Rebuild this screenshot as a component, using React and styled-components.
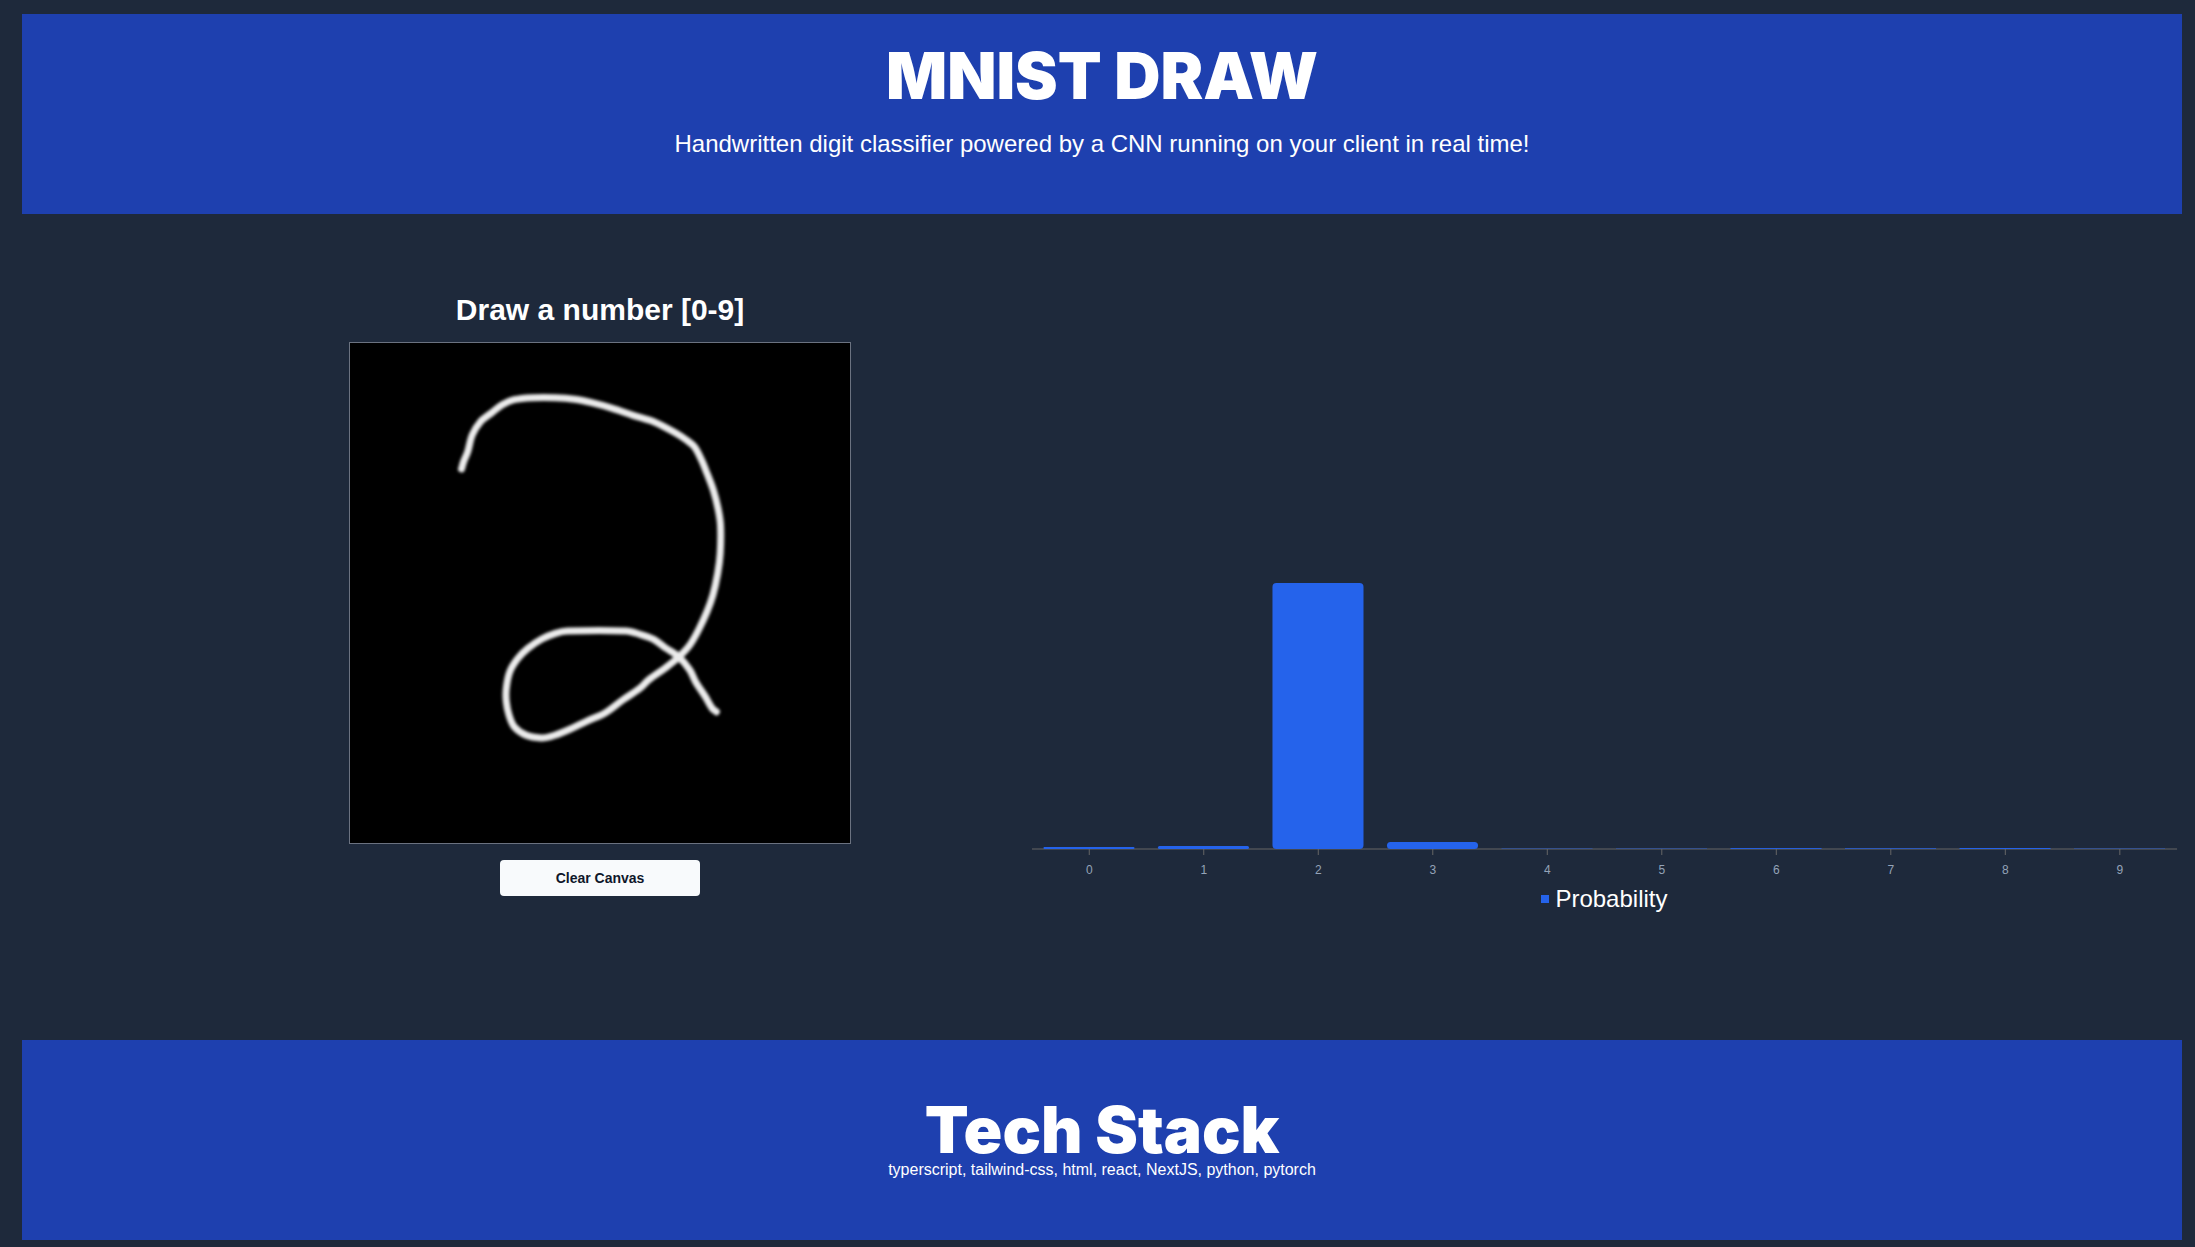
import React, { useState } from 'react';
import styled, { createGlobalStyle } from 'styled-components';

const GlobalStyle = createGlobalStyle`
  * { box-sizing: border-box; }
  body {
    margin: 0;
    background: #1e293b;
    color: #ffffff;
    font-family: "Liberation Sans", Arial, sans-serif;
  }
  h1, h2, p { margin: 0; }
`;

const Page = styled.div`
  display: flex;
  flex-direction: column;
  min-height: 100vh;
  padding: 14px 13px 7px 22px;
`;

const Banner = styled.header`
  min-height: 200px;
  padding-top: ${(p) => p.$top}px;
  background: #1e40af;
  text-align: center;
`;

const BannerTitle = styled.h1`
  font-family: "Arial Black", Inter, sans-serif;
  font-size: 64px;
  font-weight: 900;
  line-height: 60px;
`;

const Tagline = styled.p`
  margin-top: 22px;
  font-size: 24px;
  line-height: 32px;
`;

const TechList = styled.p`
  font-size: 16px;
  line-height: 20px;
`;

const Workspace = styled.main`
  flex: 1;
  display: grid;
  grid-template-columns: 17fr 23fr;
  align-items: start;
  padding: 78px 0 128px 7%;
`;

const DrawPanel = styled.section`
  display: flex;
  flex-direction: column;
  align-items: center;
`;

const PanelTitle = styled.h2`
  font-size: 30px;
  font-weight: 700;
  line-height: 36px;
`;

const Board = styled.svg`
  width: 502px;
  height: 502px;
  margin: 14px 0 16px;
  border: 1px solid #6b7280;
  background: #000000;
`;

const ClearButton = styled.button`
  width: 200px;
  height: 36px;
  border: 0;
  border-radius: 4px;
  background: #f8fafc;
  color: #0f172a;
  font: 700 14px/20px "Liberation Sans", Arial, sans-serif;
  cursor: pointer;
`;

const ChartPanel = styled.section`
  display: flex;
  flex-direction: column;
  align-items: center;
  padding: 0 5px;
`;

const Plot = styled.svg`
  width: 100%;
  height: 595px;
  overflow: visible;
`;

const TickLabel = styled.text`
  fill: #94a3b8;
  font-size: 12px;
  text-anchor: middle;
`;

const Legend = styled.div`
  display: flex;
  align-items: center;
  gap: 6px;
  font-size: 24px;
  line-height: 24px;

  &::before {
    content: "";
    width: 8px;
    height: 8px;
    background: #2563eb;
  }
`;

const BASELINE = 557;
const BAR_HEIGHTS = [2, 3, 266, 7, 0.4, 0.4, 0.9, 0.7, 1, 0.4];

// Pointer samples of the stroke, in canvas pixels.
const STROKE = [
  [111.5, 126], [113.6, 118.7], [117.7, 108.7], [122.2, 92], [130.5, 78.7], [141.8, 69.7],
  [152.2, 61.7], [164.2, 56.7], [183.2, 54.7], [205.5, 54.7], [224.5, 56.3], [241.7, 59.7],
  [262.4, 65.3], [283, 72.3], [303.7, 78.7], [324.4, 89.3], [336.4, 97], [344.3, 103.7],
  [351.2, 116.3], [357, 130.3], [363.3, 147], [368, 165.3], [370.5, 182], [370.2, 210.3],
  [367.7, 230.3], [362.9, 252], [357, 268.7], [348.5, 287], [339.8, 302], [328.5, 314.3],
  [315.7, 324.7], [298.5, 337], [289.9, 345.3], [272.7, 357], [255.5, 369.7], [236.5, 378.3],
  [217.6, 387.3], [200.4, 393.7], [191, 395], [176.3, 392.3], [164.2, 383.7], [159, 372],
  [156.3, 358.7], [156.3, 345.3], [159.8, 328.7], [167.7, 315.7], [178, 305.3], [191.8, 296],
  [205.5, 290.3], [217.6, 288], [276.1, 288], [289.9, 291.3], [303.7, 296.3], [315.7, 305],
  [328.5, 313.7], [339.8, 327], [345.7, 339], [355.3, 353.7], [362.2, 365.3], [366.4, 368.7],
];

// Catmull-Rom spline through the samples, written as cubic segments.
function smoothPath(points) {
  const at = (i) => points[Math.max(0, Math.min(points.length - 1, i))];
  let d = `M${points[0].join(' ')}`;
  for (let i = 0; i < points.length - 1; i += 1) {
    const [a, b, c, e] = [at(i - 1), at(i), at(i + 1), at(i + 2)];
    const span = Math.hypot(c[0] - b[0], c[1] - b[1]);
    const before = Math.hypot(c[0] - a[0], c[1] - a[1]) || 1;
    const after = Math.hypot(e[0] - b[0], e[1] - b[1]) || 1;
    const k1 = Math.min(span / before / 3, 1);
    const k2 = Math.min(span / after / 3, 1);
    d += ` C${b[0] + (c[0] - a[0]) * k1} ${b[1] + (c[1] - a[1]) * k1}`;
    d += ` ${c[0] - (e[0] - b[0]) * k2} ${c[1] - (e[1] - b[1]) * k2}`;
    d += ` ${c[0]} ${c[1]}`;
  }
  return d;
}

function ProbabilityChart({ heights }) {
  return (
    <Plot role="img" aria-label="Probability of each digit">
      <line x1="0" x2="100%" y1={BASELINE} y2={BASELINE} stroke="#666666" />
      {heights.map((h, digit) => (
        <g key={digit}>
          <line
            x1={`${digit * 10 + 5}%`}
            x2={`${digit * 10 + 5}%`}
            y1={BASELINE}
            y2={BASELINE + 6}
            stroke="#666666"
          />
          <rect
            x={`${digit * 10 + 1}%`}
            y={BASELINE - h}
            width="7.95%"
            height={h}
            rx={h > 1 ? Math.min(4, h / 2) : 0}
            fill="#2563eb"
          />
          <TickLabel x={`${digit * 10 + 5}%`} y={BASELINE + 25}>
            {digit}
          </TickLabel>
        </g>
      ))}
    </Plot>
  );
}

export default function App() {
  const [drawn, setDrawn] = useState(true);
  return (
    <>
      <GlobalStyle />
      <Page>
        <Banner $top={32}>
          <BannerTitle>MNIST DRAW</BannerTitle>
          <Tagline>
            Handwritten digit classifier powered by a CNN running on your client in real time!
          </Tagline>
        </Banner>
        <Workspace>
          <DrawPanel>
            <PanelTitle>Draw a number [0-9]</PanelTitle>
            <Board viewBox="0 0 500 500" role="img" aria-label="Drawing canvas">
              <filter id="soft" x="-10%" y="-10%" width="120%" height="120%" colorInterpolationFilters="sRGB">
                <feGaussianBlur stdDeviation="1.7" />
              </filter>
              {drawn && (
                <path
                  d={smoothPath(STROKE)}
                  fill="none"
                  stroke="#ececec"
                  strokeWidth="7"
                  strokeLinecap="round"
                  strokeLinejoin="round"
                  filter="url(#soft)"
                />
              )}
            </Board>
            <ClearButton type="button" onClick={() => setDrawn(false)}>
              Clear Canvas
            </ClearButton>
          </DrawPanel>
          <ChartPanel>
            <ProbabilityChart heights={drawn ? BAR_HEIGHTS : BAR_HEIGHTS.map(() => 0)} />
            <Legend>Probability</Legend>
          </ChartPanel>
        </Workspace>
        <Banner as="footer" $top={60}>
          <BannerTitle as="h2">Tech Stack</BannerTitle>
          <TechList>typerscript, tailwind-css, html, react, NextJS, python, pytorch</TechList>
        </Banner>
      </Page>
    </>
  );
}
